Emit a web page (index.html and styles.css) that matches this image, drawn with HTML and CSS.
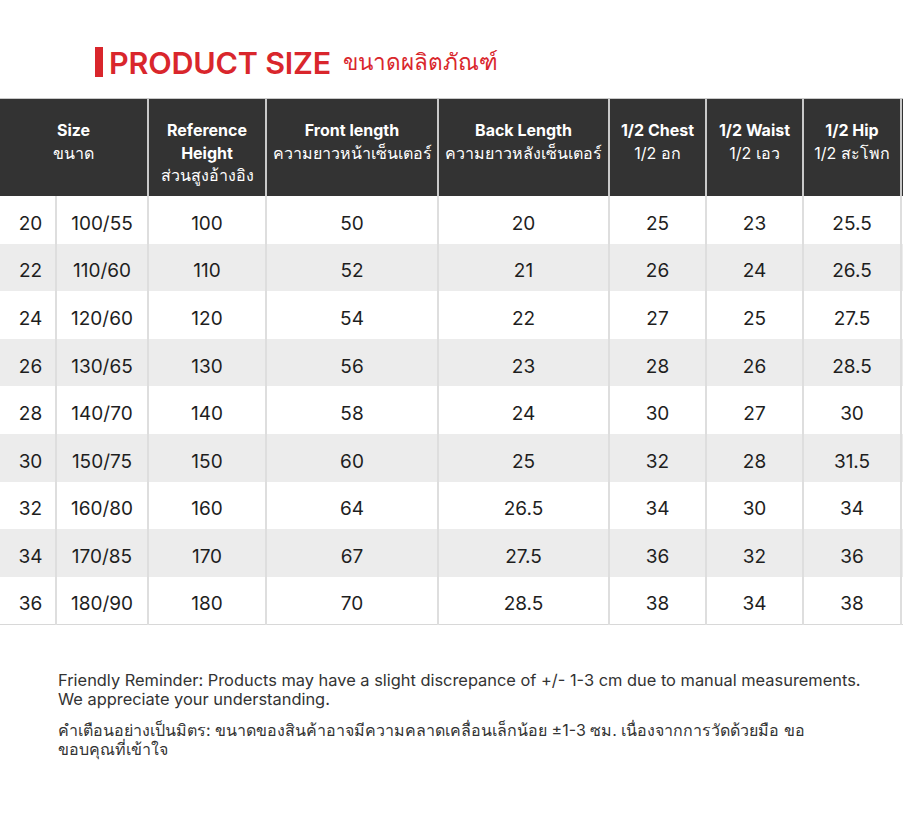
FILE: index.html
```html
<!DOCTYPE html>
<html lang="th">
<head>
<meta charset="utf-8">
<link rel="stylesheet" href="styles.css">
</head>
<body>
<div class="page">
  <h1 class="title"><span class="bar"></span><span class="en">PRODUCT SIZE</span><span class="th">ขนาดผลิตภัณฑ์</span></h1>
  <div class="table-wrap">
  <table class="sizes">
    <colgroup>
      <col class="c-a"><col class="c-b"><col class="c-ref"><col class="c-front"><col class="c-back"><col class="c-chest"><col class="c-waist"><col class="c-hip"><col class="c-extra">
    </colgroup>
    <thead>
      <tr>
        <th colspan="2"><b>Size</b><span>ขนาด</span></th>
        <th><b>Reference<br>Height</b><span>ส่วนสูงอ้างอิง</span></th>
        <th><b>Front length</b><span>ความยาวหน้าเซ็นเตอร์</span></th>
        <th><b>Back Length</b><span>ความยาวหลังเซ็นเตอร์</span></th>
        <th><b>1/2 Chest</b><span>1/2 อก</span></th>
        <th><b>1/2 Waist</b><span>1/2 เอว</span></th>
        <th><b>1/2 Hip</b><span>1/2 สะโพก</span></th>
        <th></th>
      </tr>
    </thead>
    <tbody>
      <tr><td>20</td><td>100/55</td><td>100</td><td>50</td><td>20</td><td>25</td><td>23</td><td>25.5</td><td></td></tr>
      <tr><td>22</td><td>110/60</td><td>110</td><td>52</td><td>21</td><td>26</td><td>24</td><td>26.5</td><td></td></tr>
      <tr><td>24</td><td>120/60</td><td>120</td><td>54</td><td>22</td><td>27</td><td>25</td><td>27.5</td><td></td></tr>
      <tr><td>26</td><td>130/65</td><td>130</td><td>56</td><td>23</td><td>28</td><td>26</td><td>28.5</td><td></td></tr>
      <tr><td>28</td><td>140/70</td><td>140</td><td>58</td><td>24</td><td>30</td><td>27</td><td>30</td><td></td></tr>
      <tr><td>30</td><td>150/75</td><td>150</td><td>60</td><td>25</td><td>32</td><td>28</td><td>31.5</td><td></td></tr>
      <tr><td>32</td><td>160/80</td><td>160</td><td>64</td><td>26.5</td><td>34</td><td>30</td><td>34</td><td></td></tr>
      <tr><td>34</td><td>170/85</td><td>170</td><td>67</td><td>27.5</td><td>36</td><td>32</td><td>36</td><td></td></tr>
      <tr><td>36</td><td>180/90</td><td>180</td><td>70</td><td>28.5</td><td>38</td><td>34</td><td>38</td><td></td></tr>
    </tbody>
  </table>
  </div>
  <div class="notes">
    <p class="en">Friendly Reminder: Products may have a slight discrepance of +/- 1-3 cm due to manual measurements.<br>We appreciate your understanding.</p>
    <p class="th">คำเตือนอย่างเป็นมิตร: ขนาดของสินค้าอาจมีความคลาดเคลื่อนเล็กน้อย ±1-3 ซม. เนื่องจากการวัดด้วยมือ ขอ<br>ขอบคุณที่เข้าใจ</p>
  </div>
</div>
</body>
</html>
```

FILE: styles.css
```css
html, body {
  margin: 0;
  padding: 0;
  background: #ffffff;
  overflow: hidden;
}
body {
  font-family: Inter, "Noto Sans", "Noto Sans CJK SC", sans-serif;
  color: #222;
  width: 903px;
  height: 823px;
}
.page {
  padding-top: 36px;
}
.title {
  margin: 0 0 10px 95px;
  height: 52px;
  display: flex;
  align-items: center;
  color: #d9262c;
  font-weight: 600;
}
.title .bar {
  display: inline-block;
  width: 8px;
  height: 30px;
  background: #d9262c;
  margin-right: 6px;
}
.title .en {
  font-size: 30.5px;
  letter-spacing: -0.2px;
  font-weight: 600;
}
.title .th {
  font-size: 22.5px;
  font-weight: 400;
  margin-left: 12px;
}
.table-wrap {
  width: 903px;
  overflow: hidden;
}
.sizes {
  border-collapse: collapse;
  table-layout: fixed;
  width: 912px;
  border-top: 1px solid #c8c8c8;
  border-bottom: 1px solid #d8d8d8;
}
.c-a { width: 56px; }
.c-b { width: 92px; }
.c-ref { width: 118px; }
.c-front { width: 172px; }
.c-back { width: 171px; }
.c-chest { width: 97px; }
.c-waist { width: 97px; }
.c-hip { width: 98px; }
.c-extra { width: 11px; }
.sizes th {
  background: #333333;
  color: #ffffff;
  height: 77px;
  padding: 20px 0 0;
  vertical-align: top;
  text-align: center;
  font-size: 16px;
  line-height: 22.5px;
  border-left: 2px solid #c9c9c9;
}
.sizes th:first-child { border-left: none; }
.sizes th b {
  display: block;
  font-weight: 700;
}
.sizes th span {
  display: block;
  font-weight: 400;
  white-space: nowrap;
}
.sizes td {
  height: 47.6px;
  padding: 7px 0 0;
  box-sizing: border-box;
  text-align: center;
  font-size: 19px;
  color: #1e1e1e;
  border-left: 2px solid #dedede;
}
.sizes td:first-child {
  border-left: none;
  padding-left: 6px;
}
.sizes tbody tr:nth-child(even) td { background: #ececec; }
.notes {
  margin: 46px 20px 0 58px;
  line-height: 19.5px;
  color: #333;
}
.notes p {
  margin: 0 0 11px;
  white-space: nowrap;
}
.notes .en { font-size: 16.4px; }
.notes .th { font-size: 16px; }
```
